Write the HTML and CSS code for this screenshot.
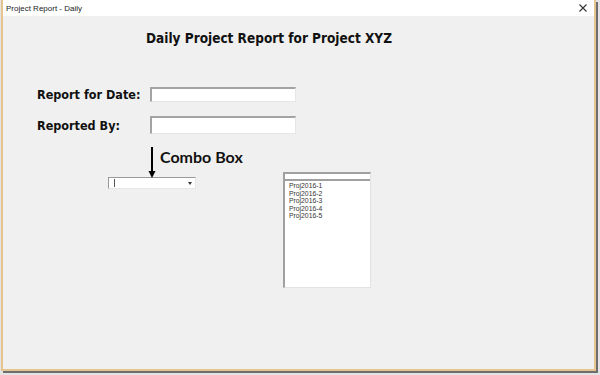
FILE: index.html
```html
<!DOCTYPE html>
<html lang="en">
<head>
    <meta charset="UTF-8">
    <title>Project Report - Daily</title>
    <link rel="stylesheet" href="styles.css">
</head>
<body>
    <div class="window">
        <div class="titlebar">
            <span class="title">Project Report - Daily</span>
            <svg class="close" width="8" height="8" viewBox="0 0 8 8">
                <path d="M0.5 0.5 L7.5 7.5 M7.5 0.5 L0.5 7.5" stroke="#333" stroke-width="1.1"/>
            </svg>
        </div>

        <div class="form">
            <h1 class="heading">Daily Project Report for Project XYZ</h1>

            <div class="field">
                <label for="reportDate">Report for Date:</label>
                <input type="text" id="reportDate" class="text-input">
            </div>

            <div class="field field-second">
                <label for="reportedBy">Reported By:</label>
                <input type="text" id="reportedBy" class="text-input text-input-tall">
            </div>

            <div class="controls">
                <div class="combo-column">
                    <div class="callout">
                        <svg class="callout-arrow" width="8" height="31" viewBox="0 0 8 31">
                            <path d="M4 0 V26" stroke="#000" stroke-width="2"/>
                            <path d="M0.5 24 L4 31 L7.5 24 Z" fill="#000"/>
                        </svg>
                        <span class="callout-text">Combo Box</span>
                    </div>
                    <div class="combo">
                        <span class="combo-caret"></span>
                        <span class="combo-button"></span>
                    </div>
                </div>

                <div class="listbox">
                    <div class="listbox-edit"></div>
                    <ul class="listbox-items">
                        <li>Proj2016-1</li>
                        <li>Proj2016-2</li>
                        <li>Proj2016-3</li>
                        <li>Proj2016-4</li>
                        <li>Proj2016-5</li>
                    </ul>
                </div>
            </div>
        </div>
    </div>
</body>
</html>
```

FILE: styles.css
```css
* {
    margin: 0;
    padding: 0;
    box-sizing: border-box;
}

body {
    background: #e4e4e4;
    font-family: 'DejaVu Sans', Tahoma, sans-serif;
    width: 600px;
    height: 375px;
    overflow: hidden;
}

.window {
    margin-left: 1px;
    width: 595px;
    height: 371px;
    border: 2px solid #e6c48f;
    border-top: none;
    background: #f0f0f0;
    box-shadow: 2px 2px 0 #6e6e6e;
    display: flex;
    flex-direction: column;
}

.titlebar {
    height: 16px;
    background: #fff;
    display: flex;
    align-items: center;
    justify-content: space-between;
    padding: 0 7px 0 3px;
}

.title {
    font-family: 'Liberation Sans', Arial, sans-serif;
    font-size: 8px;
    color: #222;
}

.close {
    display: block;
}

.form {
    flex: 1;
    padding-left: 34px;
}

.heading {
    font-family: 'DejaVu Sans Condensed', 'DejaVu Sans', sans-serif;
    font-size: 13.5px;
    font-weight: bold;
    color: #111;
    line-height: 17px;
    margin: 14px 0 0 109px;
}

.field {
    display: flex;
    align-items: center;
    margin-top: 40px;
}

.field-second {
    margin-top: 14px;
}

.field label {
    width: 113px;
    font-family: 'DejaVu Sans Condensed', 'DejaVu Sans', sans-serif;
    font-size: 12.5px;
    font-weight: bold;
    color: #111;
}

.text-input {
    width: 146px;
    height: 15px;
    background: #fff;
    border: 1px solid #e6e6e6;
    border-top: 2px solid #a3a3a3;
    border-left: 2px solid #a3a3a3;
    outline: none;
}

.text-input-tall {
    height: 18px;
}

.controls {
    display: flex;
    align-items: flex-start;
    margin-top: 13px;
    padding-left: 71px;
}

.combo-column {
    width: 175px;
}

.callout {
    display: flex;
    align-items: flex-start;
    height: 30px;
}

.callout-arrow {
    display: block;
    margin-left: 40px;
}

.callout-text {
    font-family: Lato, 'Open Sans', sans-serif;
    font-size: 16px;
    font-weight: bold;
    color: #111;
    line-height: 20px;
    margin-left: 4px;
}

.combo {
    width: 88px;
    height: 12px;
    background: #fff;
    border: 1px solid #e6e6e6;
    border-top: 1px solid #9a9a9a;
    border-left: 1px solid #9a9a9a;
    display: flex;
    align-items: center;
    justify-content: space-between;
    padding: 0 3px 0 5px;
}

.combo-caret {
    width: 1px;
    height: 8px;
    background: #555;
}

.combo-button {
    width: 0;
    height: 0;
    border-left: 2.5px solid transparent;
    border-right: 2.5px solid transparent;
    border-top: 3px solid #333;
}

.listbox {
    margin-top: 25px;
    width: 88px;
    height: 116px;
    background: #fff;
    border-left: 2px solid #a0a0a0;
    border-top: 2px solid #a0a0a0;
    border-right: 1px solid #e2e2e2;
    border-bottom: 1px solid #e2e2e2;
}

.listbox-edit {
    height: 7px;
    border-bottom: 2px solid #a0a0a0;
}

.listbox-items {
    list-style: none;
    padding: 1px 0 0 4px;
}

.listbox-items li {
    font-family: 'Liberation Sans', Arial, sans-serif;
    font-size: 6.8px;
    line-height: 7.5px;
    color: #333;
}
```
